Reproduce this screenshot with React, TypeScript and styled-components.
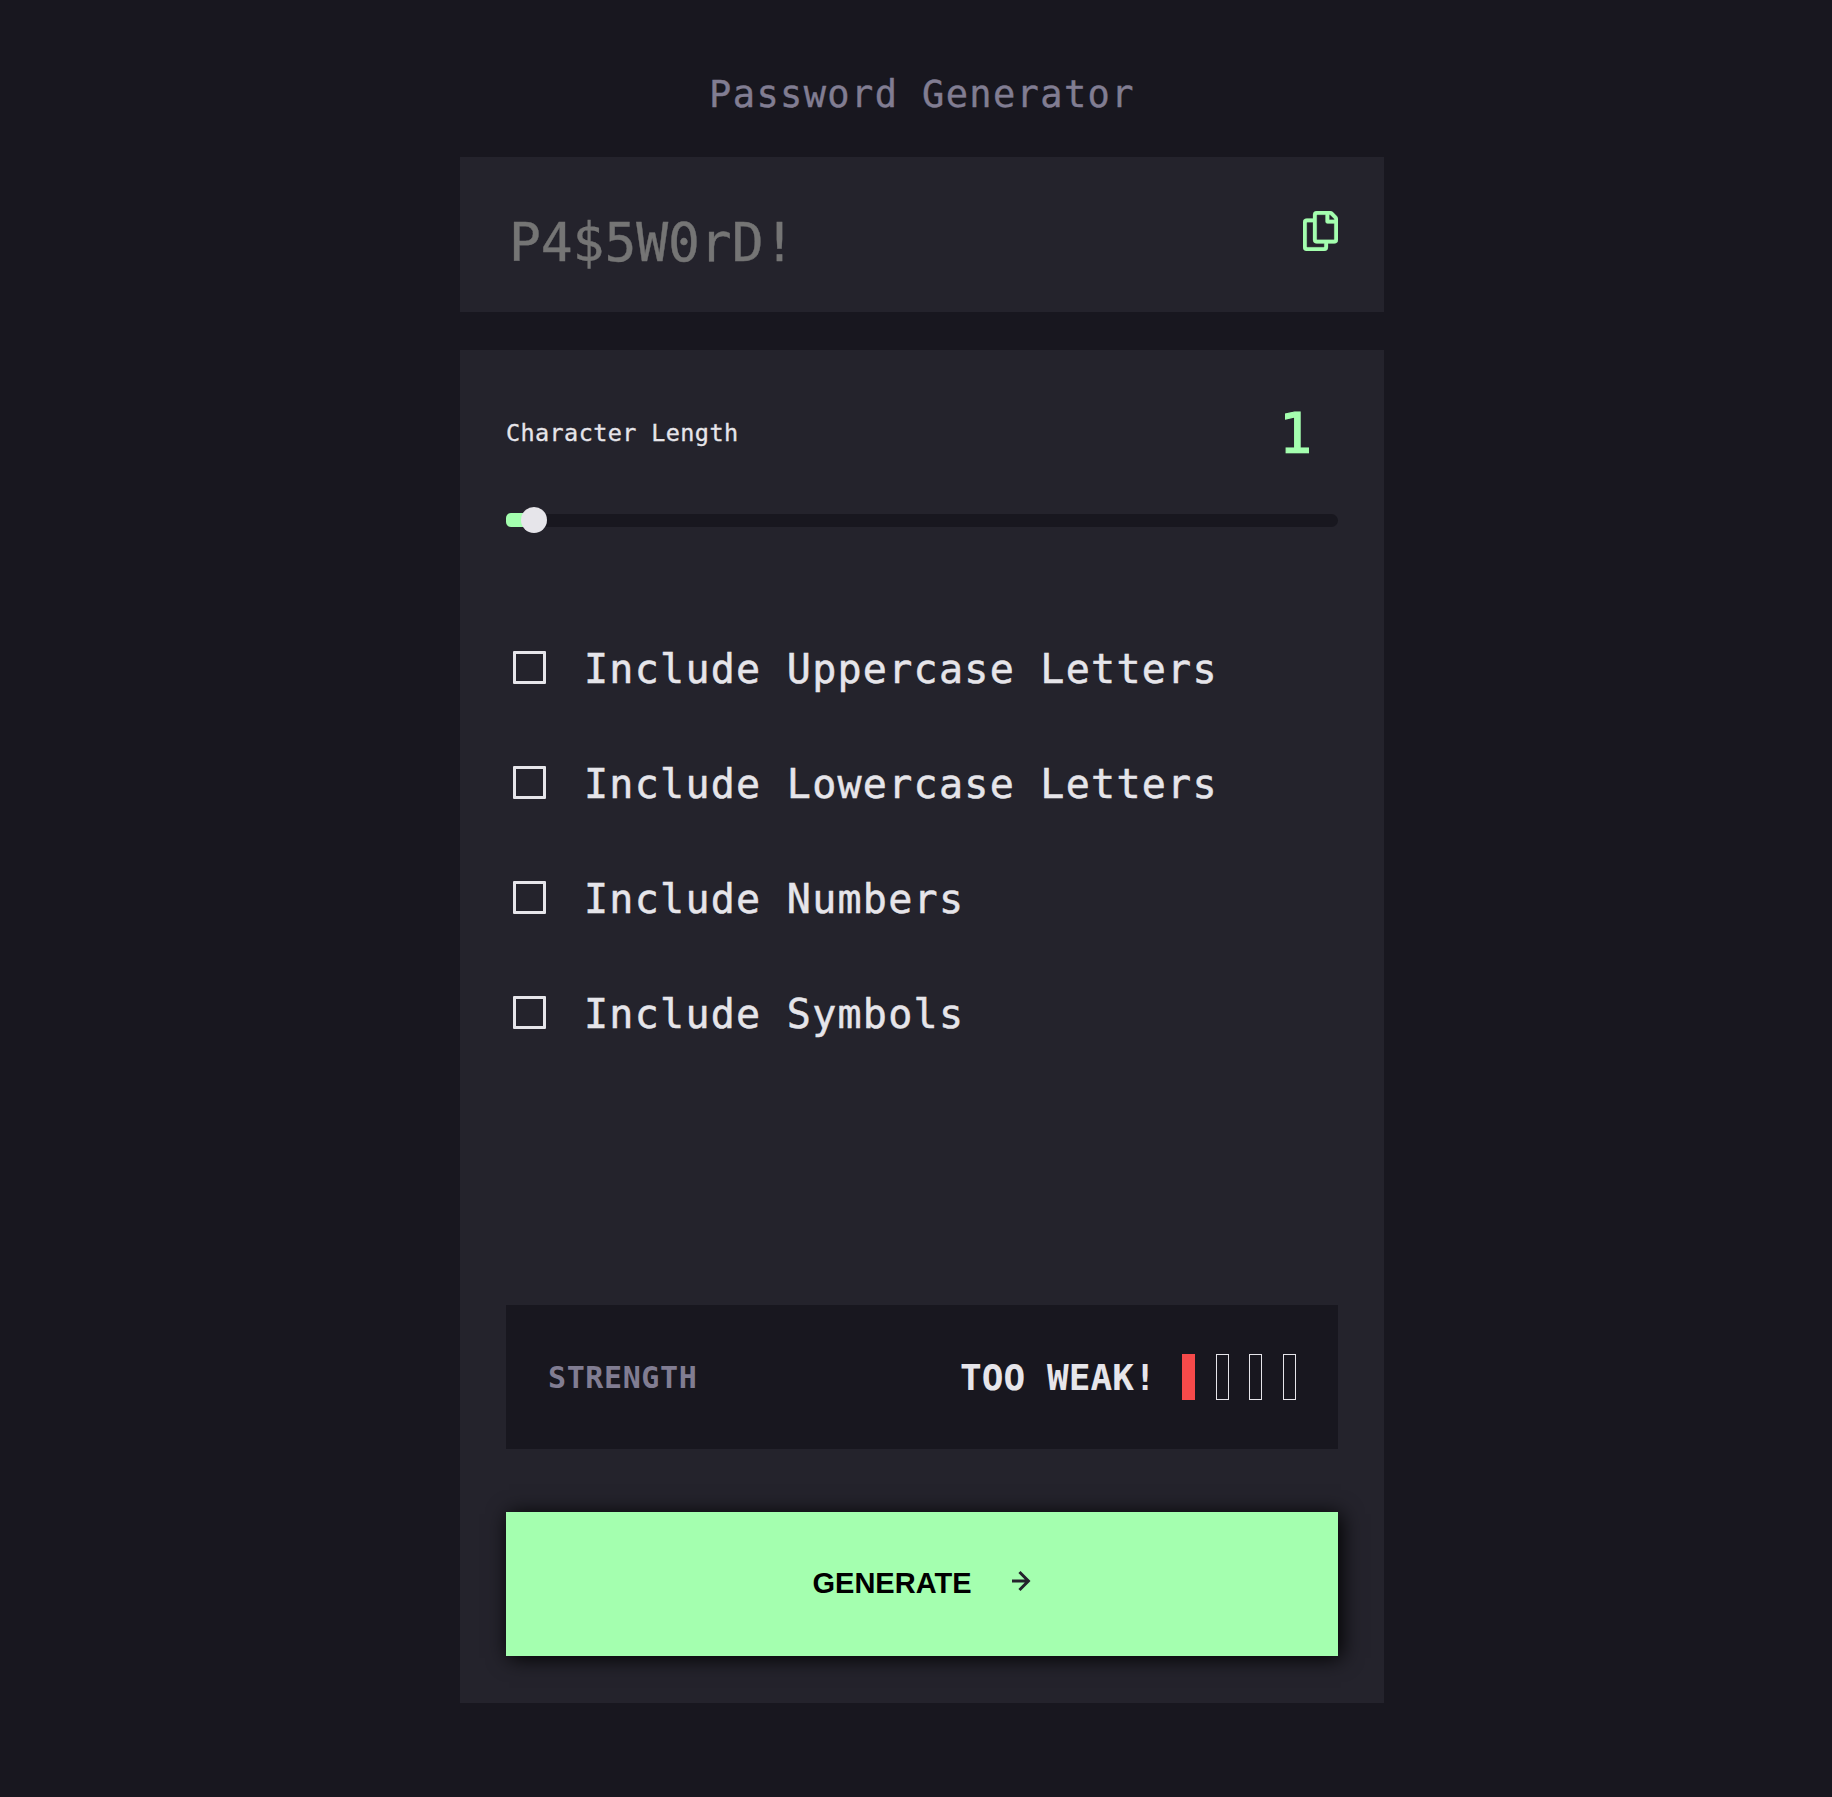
import React, { useState } from "react";
import styled, { createGlobalStyle } from "styled-components";

const colors = {
  page: "#18171f",
  panel: "#24232c",
  muted: "#817d92",
  light: "#e6e5ea",
  accent: "#a4ffaf",
  danger: "#f64a4a",
  placeholder: "#757575",
};

const mono = `"DejaVu Sans Mono", monospace`;

const GlobalStyle = createGlobalStyle`
  *, *::before, *::after { box-sizing: border-box; }
  body { margin: 0; background: ${colors.page}; }
`;

const Page = styled.main`
  display: flex;
  justify-content: center;
  min-height: 1797px;
  padding: 70px 0 94px 12px;
  background: ${colors.page};
  font-family: ${mono};
  color: ${colors.light};
`;

const Generator = styled.div`
  display: flex;
  flex-direction: column;
  width: 924px;
`;

const Title = styled.h1`
  margin: 0 0 37px;
  color: ${colors.muted};
  font-size: 37px;
  font-weight: 400;
  line-height: 50px;
  letter-spacing: 1.38px;
  text-align: center;
  -webkit-text-stroke: 0.4px currentColor;
`;

const Display = styled.section`
  display: flex;
  align-items: flex-start;
  justify-content: space-between;
  height: 155px;
  margin-bottom: 38px;
  padding: 54px 46px 0 49px;
  background: ${colors.panel};
`;

const PasswordField = styled.input`
  width: 600px;
  height: 62px;
  padding: 0;
  border: 0;
  outline: 0;
  background: transparent;
  color: ${colors.light};
  font-family: ${mono};
  font-size: 53px;
  letter-spacing: -0.1px;

  &::placeholder {
    color: ${colors.placeholder};
    opacity: 1;
    -webkit-text-stroke: 0.4px currentColor;
  }
`;

const CopyButton = styled.button`
  display: flex;
  padding: 0;
  border: 0;
  background: none;
  color: ${colors.accent};
  cursor: pointer;
`;

const Panel = styled.section`
  display: flex;
  flex-direction: column;
  height: 1353px;
  padding: 43px 46px 47px;
  background: ${colors.panel};
`;

const LengthRow = styled.div`
  display: flex;
  align-items: center;
  justify-content: space-between;
  height: 80px;
  padding-right: 26px;
`;

const LengthLabel = styled.span`
  font-size: 23.5px;
  line-height: 30px;
  letter-spacing: 0.38px;
  -webkit-text-stroke: 0.3px currentColor;
`;

const LengthValue = styled.span`
  color: ${colors.accent};
  font-size: 55px;
  line-height: 80px;
  -webkit-text-stroke: 1.2px currentColor;
`;

const Slider = styled.div`
  display: flex;
  align-items: center;
  height: 13px;
  margin-top: 41px;
  border-radius: 7px;
  background: ${colors.page};
`;

const SliderFill = styled.div`
  height: 13.5px;
  margin-top: -1px;
  border-radius: 5px 0 0 5px;
  background: ${colors.accent};
`;

const SliderThumb = styled.div`
  width: 26px;
  height: 26px;
  margin: -2px 0 0 -13px;
  border-radius: 50%;
  background: ${colors.light};
`;

const Options = styled.div`
  display: flex;
  flex-direction: column;
  gap: 65px;
  margin-top: 117px;
  padding-left: 7px;
`;

const Option = styled.label`
  display: flex;
  align-items: center;
  gap: 38px;
  height: 50px;
  font-size: 40px;
  line-height: 50px;
  letter-spacing: 1.27px;
  -webkit-text-stroke: 0.5px currentColor;
`;

const Checkbox = styled.input`
  appearance: none;
  width: 33px;
  height: 33px;
  margin: 0 0 3px;
  border: 3px solid ${colors.light};
  border-radius: 1px;

  &:checked {
    background: ${colors.accent};
    border-color: ${colors.accent};
  }
`;

const Strength = styled.div`
  display: flex;
  align-items: center;
  justify-content: space-between;
  height: 144px;
  margin-top: auto;
  padding: 0 42px;
  background: ${colors.page};
`;

const StrengthLabel = styled.span`
  color: ${colors.muted};
  font-size: 30px;
  font-weight: 700;
  letter-spacing: 0.6px;
`;

const StrengthStatus = styled.div`
  display: flex;
  align-items: center;
  gap: 26px;
`;

const StrengthText = styled.span`
  font-size: 36px;
  font-weight: 700;
  letter-spacing: 0.1px;
`;

const Bars = styled.div`
  display: flex;
  gap: 20.3px;
`;

const Bar = styled.div<{ $filled: boolean }>`
  width: 13.3px;
  height: 46px;
  border: 1px solid ${(p) => (p.$filled ? colors.danger : colors.light)};
  background: ${(p) => (p.$filled ? colors.danger : "transparent")};
`;

const GenerateButton = styled.button`
  display: flex;
  align-items: center;
  justify-content: center;
  gap: 41px;
  height: 144px;
  margin-top: 63px;
  padding: 0 0 1px 1px;
  border: 0;
  background: ${colors.accent};
  box-shadow: 3px 2px 20px #000;
  color: #000;
  font-family: "Liberation Sans", Arial, sans-serif;
  font-size: 29px;
  font-weight: 700;
  cursor: pointer;
`;

const ArrowIcon = styled.svg`
  margin-bottom: 5px;
`;

const optionNames = [
  "Include Uppercase Letters",
  "Include Lowercase Letters",
  "Include Numbers",
  "Include Symbols",
];

export default function App() {
  const [checked, setChecked] = useState<string[]>([]);
  const length = 1;

  const toggle = (name: string) =>
    setChecked((list) =>
      list.includes(name) ? list.filter((n) => n !== name) : [...list, name]
    );

  return (
    <>
      <GlobalStyle />
      <Page>
        <Generator>
          <Title>Password Generator</Title>
          <Display>
            <PasswordField placeholder="P4$5W0rD!" readOnly />
            <CopyButton aria-label="Copy">
              <svg width="35" height="40" viewBox="0 0 21 24" fill="currentColor">
                <path
                  stroke="currentColor"
                  strokeWidth="0.15"
                  d="M20.341 3.091 17.909.659A2.25 2.25 0 0 0 16.319 0H8.25A2.25 2.25 0 0 0 6 2.25V4.5H2.25A2.25 2.25 0 0 0 0 6.75v15A2.25 2.25 0 0 0 2.25 24h10.5A2.25 2.25 0 0 0 15 21.75V19.5h3.75A2.25 2.25 0 0 0 21 17.25V4.682a2.25 2.25 0 0 0-.659-1.591ZM12.469 21.75H2.53a.281.281 0 0 1-.281-.281V7.03a.281.281 0 0 1 .281-.281H6v10.5a2.25 2.25 0 0 0 2.25 2.25h4.5v1.969a.282.282 0 0 1-.281.281Zm6-4.5H8.53a.281.281 0 0 1-.281-.281V2.53a.281.281 0 0 1 .281-.281H13.5v4.125c0 .621.504 1.125 1.125 1.125h4.125v9.469a.282.282 0 0 1-.281.281Zm.281-12h-3v-3h.451c.075 0 .147.03.2.082L18.667 4.6a.283.283 0 0 1 .083.199v.451Z"
                />
              </svg>
            </CopyButton>
          </Display>
          <Panel>
            <LengthRow>
              <LengthLabel>Character Length</LengthLabel>
              <LengthValue>{length}</LengthValue>
            </LengthRow>
            <Slider role="slider" aria-valuenow={length} aria-label="Character Length">
              <SliderFill style={{ width: length * 28 }} />
              <SliderThumb />
            </Slider>
            <Options>
              {optionNames.map((name) => (
                <Option key={name}>
                  <Checkbox
                    type="checkbox"
                    checked={checked.includes(name)}
                    onChange={() => toggle(name)}
                  />
                  {name}
                </Option>
              ))}
            </Options>
            <Strength>
              <StrengthLabel>STRENGTH</StrengthLabel>
              <StrengthStatus>
                <StrengthText>TOO WEAK!</StrengthText>
                <Bars>
                  {[0, 1, 2, 3].map((i) => (
                    <Bar key={i} $filled={i === 0} />
                  ))}
                </Bars>
              </StrengthStatus>
            </Strength>
            <GenerateButton>
              GENERATE
              <ArrowIcon width="20" height="20" viewBox="0 0 12 12" fill={colors.panel}>
                <path d="m5.106 12 6-6-6-6-1.265 1.265 3.841 3.84H.001v1.79h7.681l-3.841 3.84z" />
              </ArrowIcon>
            </GenerateButton>
          </Panel>
        </Generator>
      </Page>
    </>
  );
}
